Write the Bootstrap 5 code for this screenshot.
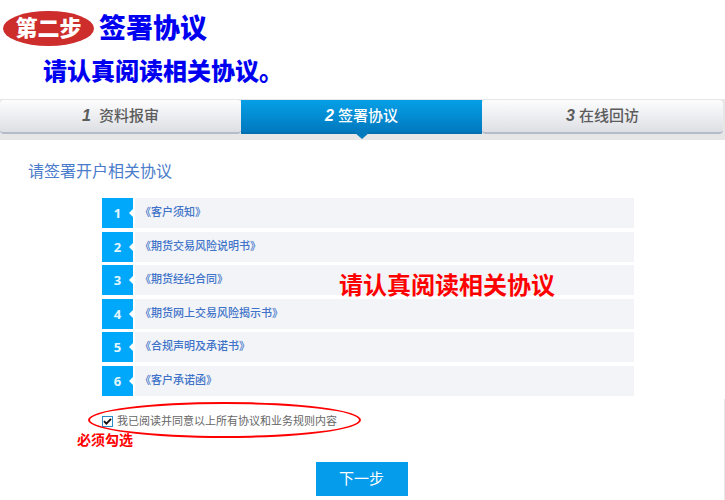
<!DOCTYPE html>
<html lang="zh-CN">
<head>
<meta charset="utf-8">
<meta name="viewport" content="width=device-width, initial-scale=1">
<title>签署协议</title>
<link href="https://cdn.jsdelivr.net/npm/bootstrap@5.3.0/dist/css/bootstrap.min.css" rel="stylesheet">
<style>
body { font-family: "Liberation Sans", "Noto Sans CJK SC", sans-serif; min-height: 100vh; color: #666; background: #fff; overflow-x: hidden; }
.guide { padding: 11px 0 0 3px; color: #0000f0; font-weight: 900; }
.step-tag { width: 91px; height: 35px; border-radius: 50%; background: #cd2d2b; color: #fff; font-size: 22px; line-height: 35px; font-weight: 900; }
.guide-title { font-size: 27px; line-height: 36px; font-weight: 900; margin-left: 5px; }
.guide-note { font-size: 24px; line-height: 30px; font-weight: 900; margin: 10px 0 0 40px; }
.steps { margin-top: 12px; padding: 1px 2px 6px 0; background: #e7e7e7; }
.step { flex: 1 1 0; height: 34px; line-height: 32px; font-size: 15px; font-weight: 500; color: #5c5c5c; text-decoration: none; background: linear-gradient(#fdfdfe, #dddfe4); border-bottom: 2px solid #b3bcc8; border-radius: 4px; }
.step i { font-size: 16px; font-weight: 700; }
.step.current { color: #fff; background: linear-gradient(#05a0e6, #0178be); border-bottom-color: #0470ad; border-radius: 0; }
.step.current::after { content: ""; position: absolute; left: 50%; top: 100%; margin-left: -8px; border: 8px solid transparent; border-top: 7px solid #0279bd; border-bottom: 0; }
.sheet-title { margin: 20px 0 0 28px; font-size: 16px; line-height: 24px; font-weight: 400; color: #4a7ccb; }
.agreements { margin: 14px 91px 0 102px; min-height: 198px; }
.agreement { height: 30px; }
.num { width: 31px; background: #00a8fc; color: #e4f7ff; font: 700 13px/31px "Noto Sans", sans-serif; }
.num::after { content: ""; position: absolute; right: 0; top: 11px; border: 4px solid transparent; border-right-color: #fff; border-left: 0; }
.doc { margin-left: 2px; padding-left: 5px; background: #f2f4f7; font-size: 11px; line-height: 29px; }
.doc a { color: #3f73c9; font-weight: 500; text-decoration: none; }
.callout { left: 339px; top: 271px; font-size: 24px; line-height: 30px; font-weight: 700; color: #f00; }
.agree { margin: 16px 0 0 102px; height: 18px; font-size: 11px; line-height: 18px; }
.agree label { margin-left: 4px; }
.agree .form-check-input { width: 11px; height: 11px; margin: 0; border: 1px solid #2c8cc8; border-radius: 0; background: #fff; }
.agree .form-check-input:checked { background: #fff url("data:image/svg+xml,%3Csvg xmlns='http://www.w3.org/2000/svg' viewBox='0 0 9 9'%3E%3Cpath d='M1 4.2 3.4 6.7 8 1.8' fill='none' stroke='%23111' stroke-width='1.9'/%3E%3C/svg%3E") center / 9px 9px no-repeat; }
.ring { left: -14px; top: -10px; width: 273px; height: 36px; border: 2px solid #f00; border-radius: 50%; pointer-events: none; }
.must { left: -25px; top: 19px; font-size: 14px; line-height: 18px; font-weight: 700; color: #f00; }
.next { margin: 32px 0 4px -2px; width: 92px; padding: 0; border: 0; border-radius: 0; background: #049ceb; color: #fff; font-size: 15px; line-height: 34px; font-weight: 400; }
.edge { right: 0; top: 399px; bottom: 0; width: 1px; background: #e6e6e6; }
</style>
</head>
<body class="position-relative">
<header class="guide">
  <div class="d-flex align-items-start">
    <span class="step-tag text-center">第二步</span>
    <h1 class="guide-title mb-0">签署协议</h1>
  </div>
  <p class="guide-note mb-0">请认真阅读相关协议。</p>
</header>
<nav class="steps d-flex" aria-label="开户步骤">
  <a href="#" class="step d-flex justify-content-center gap-2"><i>1</i><span>资料报审</span></a>
  <a href="#" class="step current position-relative d-flex justify-content-center gap-1" aria-current="step"><i>2</i><span>签署协议</span></a>
  <a href="#" class="step d-flex justify-content-center gap-1"><i>3</i><span>在线回访</span></a>
</nav>
<main>
  <h2 class="sheet-title mb-0">请签署开户相关协议</h2>
  <ol class="agreements list-unstyled d-flex flex-column justify-content-between mb-0">
    <li class="agreement d-flex"><span class="num position-relative text-center">1</span><span class="doc flex-grow-1"><a href="#">《客户须知》</a></span></li>
    <li class="agreement d-flex"><span class="num position-relative text-center">2</span><span class="doc flex-grow-1"><a href="#">《期货交易风险说明书》</a></span></li>
    <li class="agreement d-flex"><span class="num position-relative text-center">3</span><span class="doc flex-grow-1"><a href="#">《期货经纪合同》</a></span></li>
    <li class="agreement d-flex"><span class="num position-relative text-center">4</span><span class="doc flex-grow-1"><a href="#">《期货网上交易风险揭示书》</a></span></li>
    <li class="agreement d-flex"><span class="num position-relative text-center">5</span><span class="doc flex-grow-1"><a href="#">《合规声明及承诺书》</a></span></li>
    <li class="agreement d-flex"><span class="num position-relative text-center">6</span><span class="doc flex-grow-1"><a href="#">《客户承诺函》</a></span></li>
  </ol>
  <div class="agree position-relative d-flex align-items-center">
    <input class="form-check-input" type="checkbox" id="agree" checked>
    <label for="agree">我已阅读并同意以上所有协议和业务规则内容</label>
    <span class="ring position-absolute"></span>
    <span class="must position-absolute">必须勾选</span>
  </div>
  <div class="text-center"><button type="button" class="btn next">下一步</button></div>
</main>
<div class="callout position-absolute">请认真阅读相关协议</div>
<div class="edge position-absolute"></div>
<script src="https://cdn.jsdelivr.net/npm/bootstrap@5.3.0/dist/js/bootstrap.bundle.min.js"></script>
</body>
</html>
